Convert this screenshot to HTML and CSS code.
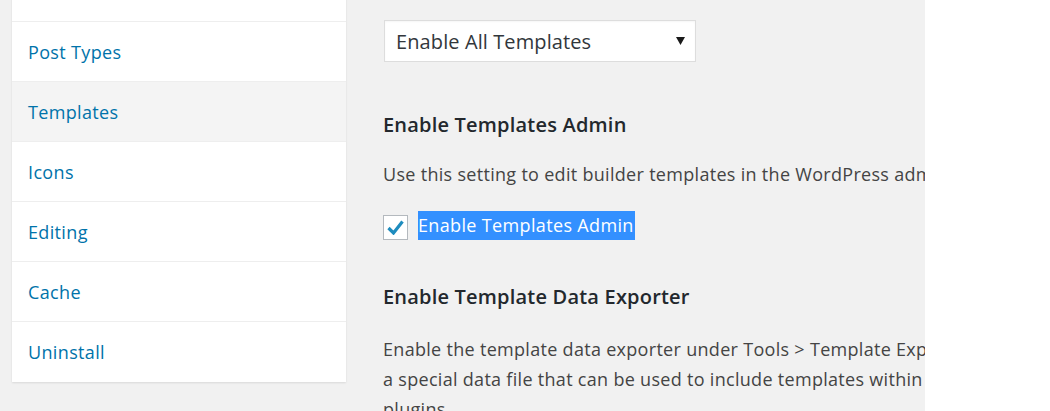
FILE: index.html
```html
<!DOCTYPE html>
<html>
<head>
<meta charset="utf-8">
<link rel="stylesheet" href="styles.css">
</head>
<body>
<div class="page">
  <div class="sidebar">
    <div class="nav-item nav-hidden">General</div>
    <div class="nav-item">Post Types</div>
    <div class="nav-item active">Templates</div>
    <div class="nav-item">Icons</div>
    <div class="nav-item">Editing</div>
    <div class="nav-item">Cache</div>
    <div class="nav-item">Uninstall</div>
  </div>
  <div class="main">
    <div class="select">
      <span>Enable All Templates</span>
      <svg class="arrow" width="9" height="8" viewBox="0 0 9 8"><path d="M0 0 H9 L4.5 8 Z" fill="#1a1a1a"/></svg>
    </div>
    <h3 class="heading first">Enable Templates Admin</h3>
    <p class="desc">Use this setting to edit builder templates in the WordPress admin dashboard.</p>
    <label class="check-row">
      <span class="checkbox">
        <svg width="17" height="15" viewBox="0 0 17 15"><path d="M1.5 8 L6.5 13 L15.5 1.5" fill="none" stroke="#1e8cbe" stroke-width="3.2" stroke-linejoin="miter"/></svg>
      </span>
      <span class="selected">Enable Templates Admin</span>
    </label>
    <h3 class="heading second">Enable Template Data Exporter</h3>
    <p class="desc multi">Enable the template data exporter under Tools &gt; Template Exporter to create<br>a special data file that can be used to include templates within themes and<br>plugins.</p>
  </div>
</div>
</body>
</html>
```
FILE: styles.css
```css
html, body {
  margin: 0;
  padding: 0;
  background: #ffffff;
  height: 411px;
  overflow: hidden;
}
body {
  font-family: "Open Sans", "Noto Sans", sans-serif;
  display: flex;
}
.page {
  width: 925px;
  height: 411px;
  background: #f1f1f1;
  overflow: hidden;
  display: flex;
  align-items: flex-start;
}
.sidebar {
  flex: none;
  width: 334px;
  margin-left: 12px;
  margin-top: -38px;
  background: #ffffff;
  box-shadow: 0 1px 2px rgba(0,0,0,0.10);
}
.nav-item {
  height: 59px;
  border-bottom: 1px solid #eeeeee;
  display: flex;
  align-items: center;
  padding-left: 16px;
  font-size: 18px;
  letter-spacing: 0.35px;
  color: #0073aa;
}
.nav-item:last-child {
  border-bottom: none;
  height: 60px;
}
.nav-item.active {
  background: #f4f4f4;
}
.main {
  flex: none;
  width: 900px;
  margin-left: 37px;
  color: #23282d;
}
.select {
  margin-top: 20px;
  width: 312px;
  height: 42px;
  box-sizing: border-box;
  border: 1px solid #dddddd;
  background: #ffffff;
  box-shadow: inset 0 1px 2px rgba(0,0,0,0.04);
  display: flex;
  align-items: center;
  justify-content: space-between;
  padding: 0 10px 0 11px;
  margin-left: 1px;
  font-size: 20px;
  letter-spacing: 0.1px;
  color: #32373c;
}
.arrow {
  flex: none;
}
.heading {
  margin: 0;
  font-size: 20px;
  font-weight: 600;
  letter-spacing: 0.2px;
  line-height: 26px;
  color: #23282d;
}
.heading.first {
  margin-top: 50px;
}
.desc {
  margin: 21px 0 0 0;
  font-size: 18px;
  letter-spacing: 0.3px;
  line-height: 30px;
  color: #444444;
  white-space: nowrap;
}
.check-row {
  display: flex;
  align-items: center;
  margin-top: 21px;
  gap: 10px;
}
.checkbox {
  width: 25px;
  height: 25px;
  box-sizing: border-box;
  border: 1px solid #b4b9be;
  background: #ffffff;
  display: flex;
  align-items: center;
  justify-content: center;
  margin-top: 5px;
}
.selected {
  background: #3390ff;
  color: #ffffff;
  font-size: 18px;
  letter-spacing: 0.35px;
  line-height: 29px;
  padding-right: 1px;
}
.heading.second {
  margin-top: 44px;
}
.desc.multi {
  margin-top: 24px;
}
```
